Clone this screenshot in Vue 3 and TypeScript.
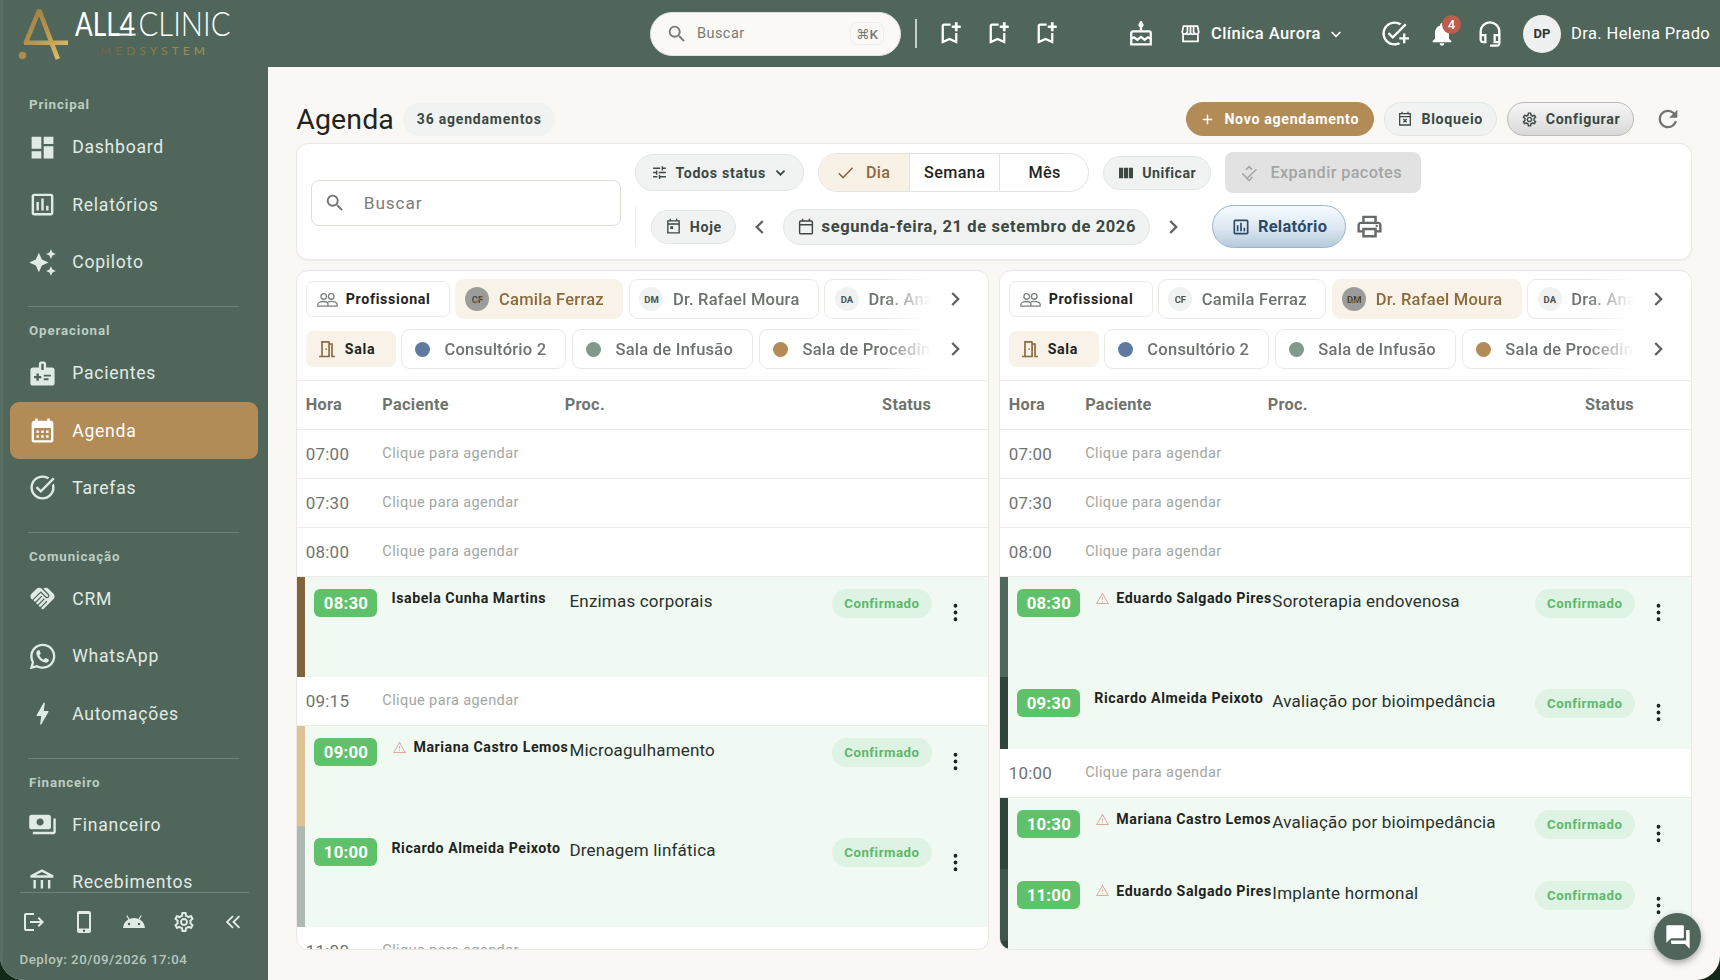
<script setup lang="ts">
import { h, type FunctionalComponent } from 'vue'

const icons: Record<string, string> = {
  dashboard: 'M13 3v6h8V3zM13 21h8V11h-8zM3 21h8v-6H3zM3 13h8V3H3z',
  chart: 'M9 17H7v-7h2v7zm4 0h-2V7h2v10zm4 0h-2v-4h2v4zm2 2H5V5h14v14zm0-16H5c-1.1 0-2 .9-2 2v14c0 1.1.9 2 2 2h14c1.1 0 2-.9 2-2V5c0-1.1-.9-2-2-2z',
  sparkle: 'M19 9l1.25-2.75L23 5l-2.75-1.25L19 1l-1.25 2.75L15 5l2.75 1.25L19 9zm-7.5.5L9 4 6.5 9.5 1 12l5.5 2.5L9 20l2.5-5.5L17 12l-5.5-2.5zM19 15l-1.25 2.75L15 19l2.75 1.25L19 23l1.25-2.75L23 19l-2.75-1.25L19 15z',
  medical: 'M20 7h-5V4c0-1.1-.9-2-2-2h-2c-1.1 0-2 .9-2 2v3H4c-1.1 0-2 .9-2 2v11c0 1.1.9 2 2 2h16c1.1 0 2-.9 2-2V9c0-1.1-.9-2-2-2zM11 4h2v5h-2V4zm0 12H9v2H7v-2H5v-2h2v-2h2v2h2v2zm2-1.5V13h6v1.5h-6zm0 3V16h4v1.5h-4z',
  month: 'M19 4h-1V2h-2v2H8V2H6v2H5c-1.11 0-1.99.9-1.99 2L3 20a2 2 0 0 0 2 2h14c1.1 0 2-.9 2-2V6c0-1.1-.9-2-2-2zm0 16H5V10h14v10zM9 14H7v-2h2v2zm4 0h-2v-2h2v2zm4 0h-2v-2h2v2zm-8 4H7v-2h2v2zm4 0h-2v-2h2v2zm4 0h-2v-2h2v2z',
  task: 'M22 5.18L10.59 16.6l-4.24-4.24 1.41-1.41 2.83 2.83 10-10L22 5.18zm-2.21 5.04c.13.57.21 1.17.21 1.78 0 4.42-3.58 8-8 8s-8-3.58-8-8 3.58-8 8-8c1.58 0 3.04.46 4.28 1.25l1.44-1.44A9.9 9.9 0 0 0 12 2C6.48 2 2 6.48 2 12s4.48 10 10 10 10-4.48 10-10c0-1.19-.22-2.33-.6-3.39l-1.61 1.61z',
  handshake: 'M16.48 10.41c-.39.39-1.04.39-1.43 0l-4.47-4.46-7.05 7.04-.66-.63c-1.17-1.17-1.17-3.07 0-4.24l4.24-4.24c1.17-1.17 3.07-1.17 4.24 0L16.48 9c.39.39.39 1.02 0 1.41zm.7-2.12c.78.78.78 2.05 0 2.83-1.27 1.27-2.61.22-2.83 0l-3.76-3.76-5.57 5.57c-.39.39-.39 1.02 0 1.41s1.02.39 1.42 0l4.62-4.62.71.71-4.62 4.62c-.39.39-.39 1.02 0 1.41s1.02.39 1.42 0l4.62-4.62.71.71-4.62 4.62c-.39.39-.39 1.02 0 1.41.39.39 1.02.39 1.41 0l4.62-4.62.71.71-4.62 4.62c-.39.39-.39 1.02 0 1.41.39.39 1.02.39 1.41 0l8.32-8.34c1.17-1.17 1.17-3.07 0-4.24l-4.24-4.24c-1.15-1.15-3.01-1.17-4.18-.06l4.47 4.47z',
  whatsapp: 'M12.3.7C6.1.7 1.1 5.6 1.1 11.7c0 2 .5 3.8 1.4 5.4L.7 23.3l6.3-1.6c1.6.8 3.4 1.2 5.3 1.2 6.1 0 11.1-5 11.1-11.2S18.4.7 12.3.7zm0 20.2c-1.8 0-3.5-.5-5-1.4l-3.6.9.9-3.4a9 9 0 0 1-1.4-5.3c0-5 4.1-9 9.1-9s9.1 4 9.1 9.1-4.1 9.1-9.1 9.1zM8.7 6.3c-1.5.3-2.5 1.7-2.1 3.5.9 3.7 3.8 6.7 7.5 7.6 1.8.4 3.3-.6 3.6-2.1l-.2-.6-2.7-1.3-.6.2-1 1.2c-1.8-.8-3.2-2.2-4-4l1.1-1 .1-.6-1.1-2.7z',
  bolt: 'M11 21h-1l1-7H7.5c-.58 0-.57-.32-.38-.66l.07-.12C8.48 10.94 10.42 7.54 13 3h1l-1 7h3.5c.49 0 .56.33.47.51l-.07.15C12.96 17.55 11 21 11 21z',
  payments: 'M19 14V6c0-1.1-.9-2-2-2H3c-1.1 0-2 .9-2 2v8c0 1.1.9 2 2 2h14c1.1 0 2-.9 2-2zm-9-1c-1.66 0-3-1.34-3-3s1.34-3 3-3 3 1.34 3 3-1.34 3-3 3zm13-6v11c0 1.1-.9 2-2 2H4v-2h17V7h2z',
  bank: 'M6.5 10h-2v7h2v-7zm6 0h-2v7h2v-7zm8.5 9H2v2h19v-2zm-2.5-9h-2v7h2v-7zm-7-6.74L16.71 6H6.29l5.21-2.74m0-2.26L2 6v2h19V6l-9.5-5z',
  logout: 'M17 7l-1.41 1.41L18.17 11H8v2h10.17l-2.58 2.58L17 17l5-5zM4 5h8V3H4c-1.1 0-2 .9-2 2v14c0 1.1.9 2 2 2h8v-2H4V5z',
  phone: 'M17 1H7c-1.1 0-2 .9-2 2v18c0 1.1.9 2 2 2h10c1.1 0 2-.9 2-2V3c0-1.1-.9-2-2-2zm0 17.5H7V4h10v14.5zM10.8 20.7a1.2 1.2 0 1 0 2.4 0a1.2 1.2 0 1 0-2.4 0z',
  android: 'M17.6 9.48l1.84-3.18c.16-.31.04-.69-.26-.85a.637.637 0 0 0-.83.22l-1.88 3.24a11.463 11.463 0 0 0-8.94 0L5.65 5.67a.643.643 0 0 0-.87-.2c-.28.18-.37.54-.22.83L6.4 9.48A10.78 10.78 0 0 0 1 18h22a10.78 10.78 0 0 0-5.4-8.52zM7 15.25a1.25 1.25 0 1 1 0-2.5 1.25 1.25 0 0 1 0 2.5zm10 0a1.25 1.25 0 1 1 0-2.5 1.25 1.25 0 0 1 0 2.5z',
  settings: 'M19.43 12.98c.04-.32.07-.64.07-.98 0-.34-.03-.66-.07-.98l2.11-1.65c.19-.15.24-.42.12-.64l-2-3.46a.5.5 0 0 0-.61-.22l-2.49 1c-.52-.4-1.08-.73-1.69-.98l-.38-2.65A.488.488 0 0 0 14 2h-4c-.25 0-.46.18-.49.42l-.38 2.65c-.61.25-1.17.59-1.69.98l-2.49-1a.566.566 0 0 0-.18-.03c-.17 0-.34.09-.43.25l-2 3.46c-.13.22-.07.49.12.64l2.11 1.65c-.04.32-.07.65-.07.98 0 .33.03.66.07.98l-2.11 1.65c-.19.15-.24.42-.12.64l2 3.46a.5.5 0 0 0 .61.22l2.49-1c.52.4 1.08.73 1.69.98l.38 2.65c.03.24.24.42.49.42h4c.25 0 .46-.18.49-.42l.38-2.65c.61-.25 1.17-.59 1.69-.98l2.49 1c.06.02.12.03.18.03.17 0 .34-.09.43-.25l2-3.46c.12-.22.07-.49-.12-.64l-2.11-1.65zm-1.98-1.71c.04.31.05.52.05.73 0 .21-.02.43-.05.73l-.14 1.13.89.7 1.08.84-.7 1.21-1.27-.51-1.04-.42-.9.68c-.43.32-.84.56-1.25.73l-1.06.43-.16 1.13-.2 1.35h-1.4l-.19-1.35-.16-1.13-1.06-.43c-.43-.18-.83-.41-1.23-.71l-.91-.7-1.06.43-1.27.51-.7-1.21 1.08-.84.89-.7-.14-1.13c-.03-.31-.05-.54-.05-.74s.02-.43.05-.73l.14-1.13-.89-.7-1.08-.84.7-1.21 1.27.51 1.04.42.9-.68c.43-.32.84-.56 1.25-.73l1.06-.43.16-1.13.2-1.35h1.39l.19 1.35.16 1.13 1.06.43c.43.18.83.41 1.23.71l.91.7 1.06-.43 1.27-.51.7 1.21-1.07.85-.89.7.14 1.13zM12 8c-2.21 0-4 1.79-4 4s1.79 4 4 4 4-1.79 4-4-1.79-4-4-4zm0 6c-1.1 0-2-.9-2-2s.9-2 2-2 2 .9 2 2-.9 2-2 2z',
  search: 'M15.5 14h-.79l-.28-.27A6.471 6.471 0 0 0 16 9.5 6.5 6.5 0 1 0 9.5 16c1.61 0 3.09-.59 4.23-1.57l.27.28v.79l5 4.99L20.49 19l-4.99-5zm-6 0C7.01 14 5 11.99 5 9.5S7.01 5 9.5 5 14 7.01 14 9.5 11.99 14 9.5 14z',
  bookmark: 'M17 11.5v6.47l-5-2.14-5 2.14V5h6V3H7c-1.1 0-2 .9-2 2v16l7-3 7 3v-9.5h-2zm5-4.3h-2.8V10h-2.4V7.2H14V4.8h2.8V2h2.4v2.8H22z',
  addTask: 'M22 5.18L10.59 16.6l-4.24-4.24 1.41-1.41 2.83 2.83 10-10L22 5.18zM12 20c-4.41 0-8-3.59-8-8s3.59-8 8-8c1.57 0 3.04.46 4.28 1.25l1.45-1.45A10.02 10.02 0 0 0 12 2C6.48 2 2 6.48 2 12s4.48 10 10 10c1.73 0 3.36-.44 4.78-1.22l-1.5-1.5c-1 .46-2.11.72-3.28.72zm7-5h-3v2h3v3h2v-3h3v-2h-3v-3h-2v3z',
  bell: 'M12 22c1.1 0 2-.9 2-2h-4c0 1.1.89 2 2 2zm6-6v-5c0-3.07-1.64-5.64-4.5-6.32V4c0-.83-.67-1.5-1.5-1.5s-1.5.67-1.5 1.5v.68C7.63 5.36 6 7.92 6 11v5l-2 2v1h16v-1l-2-2z',
  headset: 'M19 14v4h-2v-4h2M7 14v4H6c-.55 0-1-.45-1-1v-3h2m5-13a9 9 0 0 0-9 9v7c0 1.66 1.34 3 3 3h3v-8H5v-2c0-3.87 3.13-7 7-7s7 3.13 7 7v2h-4v8h4v1h-7v2h6c1.66 0 3-1.34 3-3V10a9 9 0 0 0-9-9z',
  refresh: 'M17.65 6.35A7.958 7.958 0 0 0 12 4c-4.42 0-7.99 3.58-7.99 8s3.57 8 7.99 8c3.73 0 6.84-2.55 7.73-6h-2.08A5.99 5.99 0 0 1 12 18c-3.31 0-6-2.69-6-6s2.69-6 6-6c1.66 0 3.14.69 4.22 1.78L13 11h7V4l-2.35 2.35z',
  print: 'M19 8h-1V3H6v5H5c-1.66 0-3 1.34-3 3v6h4v4h12v-4h4v-6c0-1.66-1.34-3-3-3zM8 5h8v3H8V5zm8 12v2H8v-4h8v2zm2-2v-2H6v2H4v-4c0-.55.45-1 1-1h14c.55 0 1 .45 1 1v4h-2zM17 11.5a1 1 0 1 0 2 0a1 1 0 1 0-2 0z',
  tune: 'M3 17v2h6v-2H3zM3 5v2h10V5H3zm10 16v-2h8v-2h-8v-2h-2v6h2zM7 9v2H3v2h4v2h2V9H7zm14 4v-2H11v2h10zm-6-4h2V7h4V5h-4V3h-2v6z',
  columns: 'M1.5 4h6.2v16H1.5zM8.9 4h6.2v16H8.9zM16.3 4h6.2v16h-6.2z',
  warning: 'M12 5.5L20 19.3H4L12 5.5M12 2.5L1.5 20.8h21zM12.7 16h-1.4v1.5h1.4zM12.7 10h-1.4v4.5h1.4z',
  forum: 'M21 6h-2v9H6v2c0 .55.45 1 1 1h11l4 4V7c0-.55-.45-1-1-1zm-4 6V3c0-.55-.45-1-1-1H3c-.55 0-1 .45-1 1v14l4-4h10c.55 0 1-.45 1-1z',
  more: 'M9.6 3.5a2.4 2.4 0 1 0 4.8 0a2.4 2.4 0 1 0-4.8 0zM9.6 12a2.4 2.4 0 1 0 4.8 0a2.4 2.4 0 1 0-4.8 0zM9.6 20.5a2.4 2.4 0 1 0 4.8 0a2.4 2.4 0 1 0-4.8 0z',
}
const lines: Record<string, string> = {
  left: 'M15 5.5L8.500 12l6.5 6.5',
  right: 'M9 5.5l6.5 6.5L9 18.5',
  down: 'M5.5 9l6.5 6.5L18.5 9',
  double: 'M12 5.5L5.5 12l6.5 6.5M19 5.5L12.5 12l6.5 6.5',
  plus: 'M12 4.5v15M4.5 12h15',
  check: 'M3.5 13l5.5 5.5L21 6',
  cake: 'M3 21.5V11a1.5 1.5 0 0 1 1.5-1.5h15A1.5 1.5 0 0 1 21 11v10.5zM3 16.5l2.5-1.5 3.2 2.3L12 14.7l3.3 2.6L18.5 15l2.5 1.5M12 9V6M12 1l-1.2 2.2a1.3 1.3 0 1 0 2.4 0z',
  store: 'M3.5 12.5V21h17v-8.5M4 3.5h16l1.5 7a2.7 2.7 0 0 1-4.7 1.3 3 3 0 0 1-4.8 0 3 3 0 0 1-4.8 0A2.7 2.7 0 0 1 2.5 10.5zM8.5 4v7M12 4v7M15.5 4v7',
  people: 'M4.5 8.5a3.2 3.2 0 1 0 6.4 0a3.2 3.2 0 1 0-6.4 0zM13.1 8.5a3.2 3.2 0 1 0 6.4 0a3.2 3.2 0 1 0-6.4 0zM1 19.5v-2c0-2 3.2-3.2 6-3.2s5.5 1.2 5.5 3.2v2zM12.5 14.8c1.2-.4 2.6-.6 4-.6 2.8 0 6.5 1.3 6.5 3.3v2H12.5',
  door: 'M2.5 21H6M6 21V3.5h8.5M14.5 3v18H6M14.5 6H18v15h3.5M11 11.5v1.5',
  expand: 'M3 12.5l6.5 6.5L22 7M8 7.5L12 3.5l4 4M8.5 19l4 3 4-5',
  busy: 'M4 4h16v17H4zM4 8.5h16M7.5 1v3M16.5 1v3M9.5 12l5 5M14.5 12l-5 5',
  today: 'M4 4h16v17H4zM4 8.5h16M7.5 1v3M16.5 1v3M8.5 12.5h2v2h-2z',
  calendar: 'M5 4h14a1.5 1.5 0 0 1 1.5 1.5v14A1.5 1.5 0 0 1 19 21H5a1.5 1.5 0 0 1-1.5-1.5v-14A1.5 1.5 0 0 1 5 4zM3.5 9h17M7.5 1v3M16.5 1v3',
}

const Icon: FunctionalComponent<{ name: string; size?: number; weight?: number }> = (p) => {
  const stroked = p.name in lines
  return h('svg', { viewBox: '0 0 24 24', width: p.size ?? 24, height: p.size ?? 24, class: 'icon' }, [
    h('path', stroked
      ? { d: lines[p.name], fill: 'none', stroke: 'currentColor', 'stroke-width': p.weight ?? 2 }
      : { d: icons[p.name], fill: 'currentColor', 'fill-rule': 'evenodd' }),
  ])
}
Icon.props = ['name', 'size', 'weight']

const sections = [
  { title: 'Principal', items: [['Dashboard', 'dashboard'], ['Relatórios', 'chart'], ['Copiloto', 'sparkle']] },
  { title: 'Operacional', items: [['Pacientes', 'medical'], ['Agenda', 'month'], ['Tarefas', 'task']] },
  { title: 'Comunicação', items: [['CRM', 'handshake'], ['WhatsApp', 'whatsapp'], ['Automações', 'bolt']] },
  { title: 'Financeiro', items: [['Financeiro', 'payments'], ['Recebimentos', 'bank']] },
]

interface Row { time: string; name?: string; proc?: string; warn?: boolean; color?: string; h?: number }
interface Person { initials: string; name: string; w: number; on?: boolean }
const rooms = [
  { name: 'Consultório 2', color: '#5f7aa0', w: 165.5 },
  { name: 'Sala de Infusão', color: '#7f998c', w: 181.5 },
  { name: 'Sala de Procedimentos', color: '#b38b56', w: 235 },
]
const panels: { people: Person[]; rows: Row[] }[] = [
  {
    people: [
      { initials: 'CF', name: 'Camila Ferraz', w: 168.5, on: true },
      { initials: 'DM', name: 'Dr. Rafael Moura', w: 190 },
      { initials: 'DA', name: 'Dra. Ana Beatriz', w: 190 },
    ],
    rows: [
      { time: '07:00' }, { time: '07:30' }, { time: '08:00' },
      { time: '08:30', name: 'Isabela Cunha Martins', proc: 'Enzimas corporais', color: '#82643a', h: 100.4 },
      { time: '09:15' },
      { time: '09:00', name: 'Mariana Castro Lemos', proc: 'Microagulhamento', warn: true, color: '#dec296', h: 100.4 },
      { time: '10:00', name: 'Ricardo Almeida Peixoto', proc: 'Drenagem linfática', color: '#acbab1', h: 100.4 },
      { time: '11:00' },
    ],
  },
  {
    people: [
      { initials: 'CF', name: 'Camila Ferraz', w: 168.5 },
      { initials: 'DM', name: 'Dr. Rafael Moura', w: 190, on: true },
      { initials: 'DA', name: 'Dra. Ana Beatriz', w: 190 },
    ],
    rows: [
      { time: '07:00' }, { time: '07:30' }, { time: '08:00' },
      { time: '08:30', name: 'Eduardo Salgado Pires', proc: 'Soroterapia endovenosa', warn: true, color: '#50685b', h: 100.4 },
      { time: '09:30', name: 'Ricardo Almeida Peixoto', proc: 'Avaliação por bioimpedância', color: '#30443a', h: 71.8 },
      { time: '10:00' },
      { time: '10:30', name: 'Mariana Castro Lemos', proc: 'Avaliação por bioimpedância', warn: true, color: '#30443a', h: 71.8 },
      { time: '11:00', name: 'Eduardo Salgado Pires', proc: 'Implante hormonal', warn: true, color: '#41564a', h: 71.8 },
      { time: '11:30', name: 'Isabela Cunha Martins', proc: 'Soroterapia', color: '#30443a', h: 71.8 },
    ],
  },
]
</script>

<template>
  <div class="app">
    <header class="topbar">
      <svg class="logo" width="240" height="67" viewBox="0 0 240 67">
        <defs>
          <linearGradient id="gold" gradientUnits="userSpaceOnUse" x1="24" y1="10" x2="64" y2="56">
            <stop offset="0" stop-color="#9a7a42" /><stop offset=".5" stop-color="#b8954f" /><stop offset="1" stop-color="#dfc065" />
          </linearGradient>
          <linearGradient id="fade" gradientUnits="userSpaceOnUse" x1="100" y1="0" x2="205" y2="0">
            <stop offset="0" stop-color="#6d6440" /><stop offset=".5" stop-color="#8d7a45" /><stop offset="1" stop-color="#ae9552" />
          </linearGradient>
        </defs>
        <path d="M25.500 43.500L39.200 10L57.800 59M24 42.800H68" fill="none" stroke="url(#gold)" stroke-width="4.600" stroke-linejoin="bevel" />
        <circle cx="22.500" cy="55.500" r="3.700" fill="#b08d4e" />
        <text x="75" y="35.600" class="logo-a" textLength="60" lengthAdjust="spacingAndGlyphs">ALL4</text>
        <path d="M116 34.600h19.500" stroke="#fff" stroke-width="2" />
        <text x="138.500" y="35.600" class="logo-b" textLength="92" lengthAdjust="spacingAndGlyphs">CLINIC</text>
        <text x="100" y="54.500" class="logo-c" textLength="105" fill="url(#fade)">MEDSYSTEM</text>
      </svg>
      <div class="global-search">
        <Icon name="search" :size="22" /><span>Buscar</span><kbd>⌘K</kbd>
      </div>
      <i class="top-sep"></i>
      <div class="bookmarks"><Icon v-for="n in 3" :key="n" name="bookmark" :size="27" /></div>
      <Icon class="cake" name="cake" :size="26" :weight="2.1" />
      <div class="clinic"><Icon name="store" :size="21" :weight="2" /><span>Clínica Aurora</span><Icon name="down" :size="16" :weight="2.4" /></div>
      <div class="actions">
        <Icon name="addTask" :size="29" />
        <span class="bell"><Icon name="bell" :size="28" /><b>4</b></span>
        <Icon name="headset" :size="28" />
      </div>
      <div class="user"><span class="avatar">DP</span><span class="user-name">Dra. Helena Prado</span></div>
    </header>

    <div class="body">
      <aside class="sidebar">
        <nav>
          <section v-for="s in sections" :key="s.title">
            <h4>{{ s.title }}</h4>
            <a v-for="[label, icon] in s.items" :key="label" :class="{ active: label === 'Agenda' }">
              <Icon :name="icon" :size="icon === 'whatsapp' ? 27 : 29" /><span>{{ label }}</span>
            </a>
          </section>
        </nav>
        <div class="side-foot">
          <div class="foot-icons">
            <Icon name="logout" :size="24" /><Icon name="phone" :size="24" /><Icon name="android" :size="24" />
            <Icon name="settings" :size="24" /><Icon name="double" :size="22" />
          </div>
          <p>Deploy: 20/09/2026 17:04</p>
        </div>
      </aside>

      <main>
        <div class="head">
          <h1>Agenda</h1>
          <span class="count">36 agendamentos</span>
          <div class="head-actions">
            <button class="btn primary"><Icon name="plus" :size="15" :weight="2.4" />Novo agendamento</button>
            <button class="btn block"><Icon name="busy" :size="16" :weight="1.9" />Bloqueio</button>
            <button class="btn config"><Icon name="settings" :size="17" />Configurar</button>
            <Icon class="refresh" name="refresh" :size="28" />
          </div>
        </div>

        <div class="filters">
          <div class="field"><Icon name="search" :size="22" /><span>Buscar</span></div>
          <div class="controls">
            <div class="line first">
              <button class="btn status-filter"><Icon name="tune" :size="17" />Todos status<Icon name="down" :size="15" :weight="2.8" /></button>
              <div class="toggle">
                <span class="on"><Icon name="check" :size="19" :weight="2" />Dia</span><span>Semana</span><span>Mês</span>
              </div>
              <button class="btn unify"><Icon name="columns" :size="16" />Unificar</button>
              <button class="expand"><Icon name="expand" :size="18" />Expandir pacotes</button>
            </div>
            <div class="line second">
              <i class="v-sep"></i>
              <button class="btn hoje"><Icon name="today" :size="17" :weight="1.9" />Hoje</button>
              <Icon class="prev" name="left" :size="22" :weight="2.5" />
              <button class="btn date"><Icon name="calendar" :size="18" :weight="1.9" />segunda-feira, 21 de setembro de 2026</button>
              <Icon class="next" name="right" :size="22" :weight="2.5" />
              <button class="report"><Icon name="chart" :size="20" />Relatório</button>
              <Icon class="print" name="print" :size="29" />
            </div>
          </div>
        </div>

        <div class="panels">
          <section v-for="(p, i) in panels" :key="i" class="panel">
            <div class="picks">
              <div class="pick-row">
                <span class="kind"><Icon name="people" :size="21" :weight="1.5" />Profissional</span>
                <div class="chips">
                  <span v-for="c in p.people" :key="c.name" class="chip" :class="{ on: c.on }" :style="{ width: c.w + 'px' }">
                    <em>{{ c.initials }}<Icon v-if="c.on" name="check" :size="13" :weight="2.6" /></em>{{ c.name }}
                  </span>
                </div>
                <Icon class="chev" name="right" :size="22" :weight="2.5" />
              </div>
              <div class="pick-row">
                <span class="kind room"><Icon name="door" :size="20" :weight="2" />Sala</span>
                <div class="chips">
                  <span v-for="r in rooms" :key="r.name" class="chip dot" :style="{ width: r.w + 'px' }">
                    <i :style="{ background: r.color }"></i>{{ r.name }}
                  </span>
                </div>
                <Icon class="chev" name="right" :size="22" :weight="2.5" />
              </div>
            </div>
            <div class="thead"><span>Hora</span><span>Paciente</span><span>Proc.</span><span class="st">Status</span></div>
            <template v-for="(r, n) in p.rows" :key="n">
              <div v-if="r.name" class="event" :style="{ height: r.h + 'px', borderLeftColor: r.color }">
                <span class="time">{{ r.time }}</span>
                <span class="name"><Icon v-if="r.warn" name="warning" :size="15" />{{ r.name }}</span>
                <span class="proc">{{ r.proc }}</span>
                <span class="state">Confirmado</span>
                <Icon class="more" name="more" :size="19" />
              </div>
              <div v-else class="slot"><span>{{ r.time }}</span><span class="hint">Clique para agendar</span></div>
            </template>
          </section>
        </div>
      </main>
    </div>
    <button class="fab"><Icon name="forum" :size="28" /></button>
  </div>
</template>

<style>
html, body { margin: 0; background: #12291a; overflow: hidden; }
</style>

<style scoped>
* { box-sizing: border-box; }
.app {
  width: 1720px; height: 980px; position: relative; overflow: hidden;
  display: flex; flex-direction: column;
  background: #faf8f5; border-radius: 0 0 24px 24px;
  font-family: Roboto, "Liberation Sans", sans-serif; font-size: 16px; color: #1f2421;
}
.icon { flex: none; display: block; }
button { font: inherit; border: 0; margin: 0; padding: 0; cursor: pointer; }
.topbar {
  height: 67px; flex: none; display: flex; align-items: center; background: #50665a; color: #fff;
  border-left: 3px solid #586e62;
}
.logo { margin-left: -3px; flex: none; }
.logo-a { font: 400 33px Lato, sans-serif; fill: #fff; }
.logo-b { font: 300 33px Lato, sans-serif; fill: #fff; }
.logo-c { font: 400 12px Lato, sans-serif; }
.global-search {
  margin-left: 410px; width: 251px; height: 44px; border-radius: 22px; background: #faf9f5; color: #757a76;
  display: flex; align-items: center; padding: 0 16px 0 14.5px; flex: none; border: 1px solid #dfe3dd;
}
.global-search span { margin-left: 9.5px; font-size: 14.5px; letter-spacing: .45px; }
.global-search kbd {
  margin-left: auto; width: 34px; height: 23px; border: 1px solid #eeede8; border-radius: 7px;
  display: flex; align-items: center; justify-content: center; font: 500 13.5px Roboto, "DejaVu Sans", sans-serif;
}
.top-sep { width: 1.5px; height: 29px; background: #c5cec7; margin-left: 14px; flex: none; }
.bookmarks { display: flex; gap: 21px; margin-left: 19.5px; }
.cake { margin-left: 69px; }
.clinic { display: flex; align-items: center; margin-left: 26px; font-weight: 500; font-size: 16.5px; letter-spacing: .43px; }
.clinic span { margin: 0 8px 0 10px; width: 109px; white-space: nowrap; }
.actions { display: flex; align-items: center; gap: 19.5px; margin-left: 35.5px; }
.bell { position: relative; }
.bell b {
  position: absolute; left: 14px; top: -4.5px; width: 19px; height: 19px; border-radius: 50%; background: #bc5e4b;
  font-size: 12.5px; font-weight: 500; display: flex; align-items: center; justify-content: center;
}
.user { display: flex; align-items: center; margin-left: 19.5px; }
.avatar {
  width: 38px; height: 38px; border-radius: 50%; background: #eef1f0; color: #2c3530; font-size: 13px; font-weight: 700;
  display: flex; align-items: center; justify-content: center;
}
.user-name { margin-left: 10px; font-size: 16.5px; letter-spacing: .4px; white-space: nowrap; }

.body { flex: 1; min-height: 0; display: flex; }
.sidebar {
  width: 267.5px; flex: none; background: #50665a; color: #e1ebe5; border-left: 3px solid #586e62;
  display: flex; flex-direction: column;
}
nav { height: 821.5px; overflow: hidden; padding: 24.3px 9.5px 0 6.5px; flex: none; }
nav section + section { position: relative; margin-top: 15.2px; padding-top: 11px; }
nav section + section::before {
  content: ""; position: absolute; left: 18.5px; width: 211px; top: 0; height: 1px; background: #6c8276;
}
nav h4 { margin: 0; height: 27.4px; line-height: 27.4px; padding-left: 19.5px; font-size: 13.3px; font-weight: 700; letter-spacing: .88px; color: #bccdc3; }
nav a { height: 57.4px; display: flex; align-items: center; padding-left: 18.7px; border-radius: 9px; font-size: 17.6px; letter-spacing: .74px; }
nav a .icon { width: 29px; }
nav a span { margin-left: 15px; }
nav a.active { background: #b38b56; color: #fff; }
.side-foot { margin: 3.5px 19px 0 16.5px; border-top: 1px solid #708478; }
.foot-icons { display: flex; justify-content: space-between; align-items: center; height: 58px; padding: 0 4.5px 0 2px; }
.side-foot p { margin: 0; line-height: 18px; font-size: 13.3px; font-weight: 500; letter-spacing: .52px; color: #b7c7be; white-space: nowrap; }

main { flex: 1; min-width: 0; padding: 35px 28.5px 0 28.8px; display: flex; flex-direction: column; }
.head { display: flex; align-items: center; height: 34px; flex: none; }
h1 { margin: 0; font-weight: 400; font-size: 28.5px; width: 107px; letter-spacing: .1px; }
.count { height: 33px; width: 152px; border-radius: 17px; background: #f0f3f1; display: flex; align-items: center; justify-content: center; font-size: 14px; font-weight: 700; letter-spacing: .8px; color: #3c4842; }
.head-actions { margin-left: auto; display: flex; align-items: center; gap: 10px; }
.btn {
  height: 34px; border-radius: 18px; border: 1px solid #e3e7e3; background: #f0f3f2; color: #3c4842;
  font-size: 14.2px; font-weight: 700; letter-spacing: .67px; display: flex; align-items: center; justify-content: center;
  gap: 8px; white-space: nowrap;
}
.primary { width: 187.5px; background: #b38b56; border-color: #b38b56; color: #fff; gap: 9px; }
.block { width: 113.5px; }
.config { width: 127px; background: linear-gradient(#f6f6f6, #d9d9da); border-color: #b9bcbb; }
.refresh { color: #70736f; margin: 0 10px 0 9.5px; }

.filters {
  margin-top: 7.2px; height: 116.8px; flex: none; background: #fff; border: 1px solid #e9e8e3; border-radius: 12px;
  display: flex; align-items: center; padding-left: 13.5px; box-shadow: 0 1px 1px rgba(60, 60, 40, .05);
}
.field { width: 310px; height: 46px; margin-top: 3.5px; border: 1px solid #dfdfd8; border-radius: 8px; display: flex; align-items: center; padding-left: 12px; color: #6f726f; }
.field span { margin-left: 18px; font-size: 17.3px; letter-spacing: .85px; color: #7a7d7a; }
.controls { margin-left: 14px; height: 100%; padding-top: 7.5px; }
.line { display: flex; align-items: center; height: 42px; }
.first { padding-left: .4px; }
.second { margin-top: 12px; }
.status-filter { width: 169px; height: 37px; gap: 7.5px; letter-spacing: .7px; }
.toggle { margin-left: 14px; width: 271px; height: 39px; border: 1px solid #e3e3df; border-radius: 20px; display: flex; overflow: hidden; font-weight: 500; font-size: 16.2px; }
.toggle span { width: 90px; flex: none; display: flex; align-items: center; justify-content: center; letter-spacing: .35px; }
.toggle span + span { border-left: 1px solid #e3e3df; }
.toggle .on { background: #f8f1e6; color: #8c6a3b; gap: 11px; padding-right: 2px; }
.unify { margin-left: 14px; width: 108px; letter-spacing: .5px; }
.expand { margin-left: 14px; width: 196px; height: 41px; background: #e2e2e2; border-radius: 8px; color: #a3a5a4; font-size: 16.2px; font-weight: 500; letter-spacing: .4px; display: flex; align-items: center; justify-content: center; gap: 13px; padding-right: 5px; }
.v-sep { width: 1px; height: 39px; background: #ebebe7; }
.hoje { margin-left: 15px; width: 85px; }
.prev { margin: 0 12px 0 13px; color: #5d615e; }
.date { width: 367px; height: 36px; font-size: 16.5px; letter-spacing: .61px; gap: 7px; background: #f0f3f1; }
.next { margin: 0 27.5px 0 12.5px; color: #5d615e; }
.report { width: 134.5px; height: 43px; border-radius: 22px; border: 1px solid #9fb4c6; background: linear-gradient(#f2f8fd 10%, #dbe6f0 55%, #b5cadc); color: #2b4a6b; font-weight: 700; font-size: 16.4px; letter-spacing: .3px; display: flex; align-items: center; justify-content: center; gap: 7px; }
.print { margin-left: 9px; color: #666a67; }

.panels { display: flex; gap: 10.5px; margin-top: 10px; height: 680.5px; flex: none; }
.panel { flex: 1; min-width: 0; background: #fff; border: 1px solid #e9e8e3; border-radius: 12px; overflow: hidden; }
.picks { height: 110px; padding: 8px 8.5px 0; border-bottom: 1px solid #ebebe8; }
.pick-row { display: flex; align-items: center; height: 41px; margin-bottom: 9px; }
.kind { flex: none; width: 144px; height: 36px; border: 1px solid #ebebe7; border-radius: 7px; display: flex; align-items: center; padding-left: 10px; gap: 8px; font-size: 14.2px; font-weight: 700; letter-spacing: .67px; }
.kind .icon { color: #7c807d; }
.room { width: 90px; background: #f8f2e9; border-color: #f8f2e9; }
.room .icon { color: #8c6a3b; }
.chips { display: flex; gap: 5.5px; margin-left: 5.2px; flex: 1; min-width: 0; overflow: hidden; margin-right: 13px; -webkit-mask-image: linear-gradient(90deg, #000 calc(100% - 48px), transparent); mask-image: linear-gradient(90deg, #000 calc(100% - 48px), transparent); }
.chip { flex: none; height: 40px; border: 1px solid #e8e8e4; border-radius: 9px; display: flex; align-items: center; padding-left: 9.5px; color: #6f736f; font-size: 16.5px; font-weight: 500; letter-spacing: .24px; white-space: nowrap; }
.chip em { position: relative; width: 24px; height: 24px; border-radius: 50%; background: #f0f2f1; color: #4a534e; font-style: normal; font-size: 9.5px; font-weight: 700; display: flex; align-items: center; justify-content: center; margin-right: 9.5px; letter-spacing: 0; }
.chip em .icon { position: absolute; left: 6px; top: 6px; color: #94713d; }
.chip.on { background: #f8f2e8; border-color: #f8f2e8; color: #8c6a3b; }
.chip.on em { background: #9c9c9b; color: #3f4542; }
.chip.dot { padding-left: 13.5px; }
.chip.dot i { width: 15px; height: 15px; border-radius: 50%; margin-right: 14px; }
.chev { color: #5d615e; margin-right: 13px; }
.thead, .slot { display: flex; align-items: center; height: 48.9px; border-bottom: 1px solid #ebebe8; padding-left: 8.5px; }
.thead { color: #70746f; font-weight: 700; font-size: 16.3px; letter-spacing: .3px; }
.thead span:nth-child(1), .slot span:first-child { width: 76.5px; }
.thead span:nth-child(2) { width: 182.5px; }
.st { margin-left: auto; margin-right: 56.5px; }
.slot { font-size: 17px; color: #70746f; letter-spacing: .2px; }
.slot .hint { font-size: 14.5px; color: #a3a6a3; letter-spacing: .4px; }
.event { background: #f0faf3; border-left: 8.5px solid; display: flex; align-items: flex-start; }
.time { margin: 12px 0 0 9.2px; width: 63px; height: 28px; border-radius: 6px; background: #5fc26b; color: #fff; font-size: 16.8px; font-weight: 700; letter-spacing: .2px; display: flex; align-items: center; justify-content: center; }
.name { margin: 11.5px 0 0 14px; width: 178px; height: 20px; display: flex; align-items: center; font-size: 14.2px; font-weight: 700; letter-spacing: .54px; white-space: nowrap; }
.name .icon { color: #dda9a2; margin: 0 6px 0 1px; }
.proc { margin-top: 14px; line-height: 20px; font-size: 17px; letter-spacing: .19px; color: #2a302c; white-space: nowrap; }
.state { margin: 12px 0 0 auto; width: 99.5px; height: 29px; border-radius: 15px; background: #def3e3; color: #5cb96a; font-size: 13.2px; font-weight: 700; letter-spacing: .55px; display: flex; align-items: center; justify-content: center; }
.more { margin: 26.5px 23px 0 14px; color: #1e2521; }
.fab { position: absolute; left: 1654px; top: 913px; width: 47px; height: 47px; border-radius: 50%; background: #50665a; color: #fff; display: flex; align-items: center; justify-content: center; box-shadow: 0 3px 7px rgba(0, 0, 0, .35); }
</style>
